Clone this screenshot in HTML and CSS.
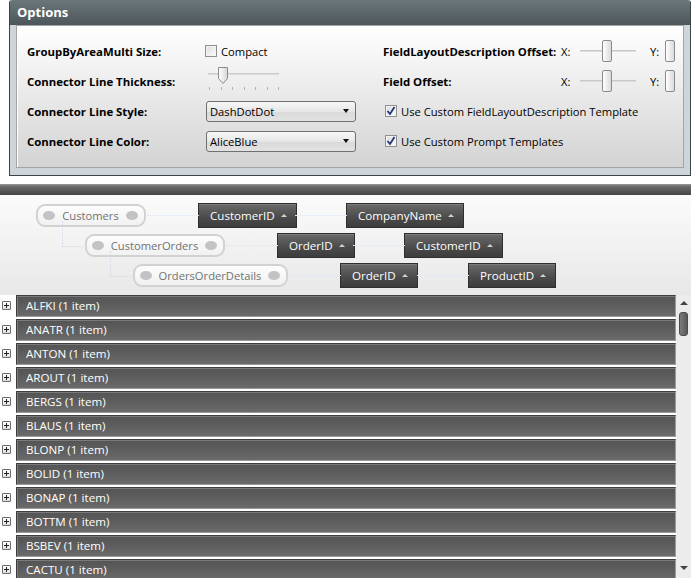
FILE: index.html
```html
<!DOCTYPE html>
<html>
<head>
<meta charset="utf-8">
<link rel="stylesheet" href="styles.css">
</head>
<body>
<div class="options">
  <div class="options-title">Options</div>
  <div class="options-frame">
    <div class="options-body">
      <div class="lbl">GroupByAreaMulti Size:</div>
      <div class="cell"><span class="check"></span><span class="check-text">Compact</span></div>
      <div class="cell c3">
        <span class="lbl lbl3">FieldLayoutDescription Offset:</span>
        <span class="axis">X:</span>
        <span class="hslider"><span class="track"></span><span class="rthumb t-mid"></span></span>
        <span class="axis axis-y">Y:</span>
        <span class="rthumb"></span>
      </div>

      <div class="lbl">Connector Line Thickness:</div>
      <div class="cell">
        <div class="tslider">
          <div class="ttrack"></div>
          <svg class="pthumb" width="12" height="19" viewBox="0 0 12 19">
            <defs><linearGradient id="pg" x1="0" y1="0" x2="1" y2="0"><stop offset="0" stop-color="#ffffff"/><stop offset="1" stop-color="#d6d6d6"/></linearGradient></defs>
            <path d="M1.5 1.5 H10.5 V12.5 L6 17.5 L1.5 12.5 Z" fill="url(#pg)" stroke="#8a8a8a" stroke-width="1"/>
          </svg>
          <div class="ticks"><i></i><i></i><i></i><i></i><i></i><i></i><i></i></div>
        </div>
      </div>
      <div class="cell c3">
        <span class="lbl lbl3">Field Offset:</span>
        <span class="axis">X:</span>
        <span class="hslider"><span class="track"></span><span class="rthumb t-mid"></span></span>
        <span class="axis axis-y">Y:</span>
        <span class="rthumb"></span>
      </div>

      <div class="lbl">Connector Line Style:</div>
      <div class="cell"><div class="combo"><span>DashDotDot</span><span class="carrow"></span></div></div>
      <div class="cell c3"><span class="check checked"><svg width="10" height="10" viewBox="0 0 10 10"><path d="M1.5 5 L4 8 L8.5 1" fill="none" stroke="#27367a" stroke-width="1.8"/></svg></span><span class="check-text">Use Custom FieldLayoutDescription Template</span></div>

      <div class="lbl">Connector Line Color:</div>
      <div class="cell"><div class="combo"><span>AliceBlue</span><span class="carrow"></span></div></div>
      <div class="cell c3"><span class="check checked"><svg width="10" height="10" viewBox="0 0 10 10"><path d="M1.5 5 L4 8 L8.5 1" fill="none" stroke="#27367a" stroke-width="1.8"/></svg></span><span class="check-text">Use Custom Prompt Templates</span></div>
    </div>
  </div>
</div>

<div class="splitter"></div>

<div class="groupby">
  <div class="gb-row r1">
    <div class="pill p1"><i class="dot"></i><span>Customers</span><i class="dot"></i></div>
    <div class="field f11">CustomerID<span class="up"></span></div>
    <div class="field f12">CompanyName<span class="up"></span></div>
  </div>
  <div class="gb-row r2">
    <div class="pill p2 linked"><i class="dot"></i><span>CustomerOrders</span><i class="dot"></i></div>
    <div class="field f21">OrderID<span class="up"></span></div>
    <div class="field f22">CustomerID<span class="up"></span></div>
  </div>
  <div class="gb-row r3">
    <div class="pill p3 linked"><i class="dot"></i><span>OrdersOrderDetails</span><i class="dot"></i></div>
    <div class="field f31">OrderID<span class="up"></span></div>
    <div class="field f32">ProductID<span class="up"></span></div>
  </div>
</div>

<div class="records">
  <div class="rows">
    <div class="rec"><span class="exp"></span><div class="bar">ALFKI (1 item)</div></div>
    <div class="rec"><span class="exp"></span><div class="bar">ANATR (1 item)</div></div>
    <div class="rec"><span class="exp"></span><div class="bar">ANTON (1 item)</div></div>
    <div class="rec"><span class="exp"></span><div class="bar">AROUT (1 item)</div></div>
    <div class="rec"><span class="exp"></span><div class="bar">BERGS (1 item)</div></div>
    <div class="rec"><span class="exp"></span><div class="bar">BLAUS (1 item)</div></div>
    <div class="rec"><span class="exp"></span><div class="bar">BLONP (1 item)</div></div>
    <div class="rec"><span class="exp"></span><div class="bar">BOLID (1 item)</div></div>
    <div class="rec"><span class="exp"></span><div class="bar">BONAP (1 item)</div></div>
    <div class="rec"><span class="exp"></span><div class="bar">BOTTM (1 item)</div></div>
    <div class="rec"><span class="exp"></span><div class="bar">BSBEV (1 item)</div></div>
    <div class="rec"><span class="exp"></span><div class="bar">CACTU (1 item)</div></div>
  </div>
  <div class="scrollbar">
    <span class="sb-up"></span>
    <span class="sb-thumb"></span>
    <span class="sb-fill"></span>
    <span class="sb-down"></span>
  </div>
</div>
</body>
</html>
```
FILE: styles.css
```css
* { box-sizing: border-box; }
html, body { margin: 0; padding: 0; background: #ffffff; }
body {
  width: 691px; height: 578px; overflow: hidden;
  font-family: "Open Sans", "Noto Sans", sans-serif;
  font-size: 11.2px; color: #000;
}

/* ---------- Options panel ---------- */
.options {
  margin-left: 9px;
  width: 682px;
  height: 176px;
  border: 1px solid #3b4447;
  border-top: none;
  border-radius: 3px 3px 0 0;
  background: #cdd4da;
  display: flex; flex-direction: column;
}
.options-title {
  height: 25px;
  background: linear-gradient(#6a767a, #4d575b);
  color: #fff;
  font-weight: bold;
  font-size: 13px;
  padding-left: 7px;
  line-height: 24px;
  border-radius: 3px 3px 0 0;
}
.options-frame {
  flex: 1;
  padding: 0 6px 7px 6px;
  display: flex;
}
.options-body {
  flex: 1;
  border: 1px solid #a4a4a4;
  box-shadow: inset 1px 1px 0 #ffffff;
  background: linear-gradient(#ffffff, #d3d3d3);
  padding: 10px 0 0 10px;
  display: grid;
  grid-template-columns: 178px 178px 1fr;
  grid-auto-rows: 30px;
  overflow: hidden;
}
.lbl { font-weight: bold; font-size: 11.4px; display: flex; align-items: center; white-space: nowrap; }
.cell { display: flex; align-items: center; white-space: nowrap; }
.lbl3 { width: 178px; }
.axis { width: 19px; }
.axis-y { width: 15px; margin-left: 14px; }

.check {
  width: 12px; height: 12px;
  border: 1px solid #8e8f8f;
  background: linear-gradient(135deg, #dcdcdc, #fbfbfb);
  box-shadow: inset 0 0 0 1px #f4f4f4;
  display: inline-flex; align-items: center; justify-content: center;
  flex: none;
}
.c3 .check { margin-left: 2px; }
.check-text { margin-left: 4px; }

.hslider { position: relative; width: 56px; height: 22px; display: inline-block; }
.hslider .track {
  position: absolute; left: 0; right: 0; top: 10px; height: 2px;
  background: #dcdcdc; border-top: 1px solid #c9c9c9;
}
.rthumb {
  display: inline-block;
  width: 10px; height: 22px;
  border: 1px solid #8b8b8b; border-radius: 2px;
  background: linear-gradient(90deg, #ffffff, #dadada);
  flex: none;
}
.hslider .t-mid { position: absolute; left: 22px; top: 0; }

.tslider { position: relative; width: 74px; height: 26px; margin-left: 3px; margin-top: -4px; }
.ttrack { position: absolute; left: 0; right: 3px; top: 7px; height: 2px; background: #dedede; border-top: 1px solid #cacaca; }
.pthumb { position: absolute; left: 9px; top: 0; }
.ticks { position: absolute; left: 1px; right: 3px; top: 21px; height: 3px; display: flex; justify-content: space-between; }
.ticks i { width: 1px; height: 3px; background: #b4b4b4; }

.combo {
  margin-left: 1px;
  width: 150px; height: 21px;
  border: 1px solid #707070; border-radius: 3px;
  background: linear-gradient(#f7f7f7, #e6e6e6 50%, #dadada 51%, #e2e2e2);
  display: flex; align-items: center; justify-content: space-between;
  padding: 0 6px 0 3px;
}
.carrow { width: 0; height: 0; border-left: 3.5px solid transparent; border-right: 3.5px solid transparent; border-top: 4px solid #111; }

/* ---------- splitter ---------- */
.splitter {
  margin-top: 8px;
  height: 11px;
  background: linear-gradient(#9a9a9a, #6e6e6e 20%, #575757 60%, #454545);
}

/* ---------- group by area ---------- */
.groupby {
  height: 100px;
  background: linear-gradient(#fbfbfb, #e8e8e8);
  padding-top: 8px;
}
.gb-row { height: 30px; display: flex; align-items: flex-start; }
.pill {
  position: relative;
  margin-top: 1px;
  height: 23px;
  border: 2px solid #d2d2d2; border-radius: 9px;
  background: linear-gradient(#fdfdfd, #f1f1f1);
  display: flex; align-items: center; justify-content: space-between;
  padding: 0 6px 0 5px;
  color: #727272;
}
.dot { width: 12px; height: 9px; border-radius: 50%; background: #c3c3c3; display: block; }
.p1 { margin-left: 36px; width: 110px; }
.p2 { margin-left: 85px; width: 140px; }
.p3 { margin-left: 133px; width: 155px; }
.linked::before {
  content: ""; position: absolute;
  left: -25px; top: -15px; width: 23px; height: 25px;
  border-left: 1px dotted #cfdbe6; border-bottom: 1px dotted #cfdbe6;
}
.field {
  position: relative;
  height: 25px;
  border: 1px solid #2f2f2f;
  background: linear-gradient(#6a6a6a, #4a4a4a 60%, #3d3d3d);
  box-shadow: inset 0 1px 0 #7d7d7d;
  color: #fff;
  font-size: 11.6px;
  display: flex; align-items: center; justify-content: space-between;
  padding: 0 9px 0 11px;
}
.field::before {
  content: ""; position: absolute; right: 100%; top: 11px; width: 52px;
  border-top: 1px dotted #dde6ee;
}
.up { width: 0; height: 0; border-left: 3px solid transparent; border-right: 3px solid transparent; border-bottom: 3px solid #d0d0d0; }
.f11 { margin-left: 52px; width: 99px; }
.f12 { margin-left: 49px; width: 118px; }
.f21 { margin-left: 52px; width: 78px; }
.f22 { margin-left: 49px; width: 99px; }
.f31 { margin-left: 52px; width: 78px; }
.f32 { margin-left: 50px; width: 88px; }

/* ---------- records ---------- */
.records { height: 283px; display: flex; overflow: hidden; }
.rows { width: 676px; }
.rec { height: 24px; display: flex; }
.exp {
  width: 9px; height: 9px; margin: 6px 5px 0 2px; flex: none;
  border: 1px solid #6a6a6a; border-radius: 1px;
  background:
    linear-gradient(#222, #222) center / 5px 1px no-repeat,
    linear-gradient(#222, #222) center / 1px 5px no-repeat,
    linear-gradient(#ffffff, #e2e2e2);
}
.bar {
  flex: 1; height: 22px;
  border: 1px solid #3d3d3d;
  border-right-color: #9a9a9a; border-bottom-color: #9a9a9a;
  box-shadow: inset 1px 1px 0 #7a7a7a;
  background: linear-gradient(#545454, #5e5e5e 50%, #6a6a6a);
  color: #fff;
  font-size: 11.6px;
  padding-left: 9px;
  line-height: 20px;
}
.scrollbar {
  width: 15px;
  background: #ececec;
  display: flex; flex-direction: column; align-items: center;
}
.sb-up { margin-top: 6px; width: 0; height: 0; border-left: 4px solid transparent; border-right: 4px solid transparent; border-bottom: 4px solid #444; }
.sb-thumb { margin-top: 7px; width: 9px; height: 24px; border-radius: 3px; border: 1px solid #4a4a4a; background: linear-gradient(90deg, #7a7a7a, #5a5a5a); }
.sb-fill { flex: 1; }
.sb-down { margin-bottom: 8px; width: 0; height: 0; border-left: 4px solid transparent; border-right: 4px solid transparent; border-top: 4px solid #444; }
```
